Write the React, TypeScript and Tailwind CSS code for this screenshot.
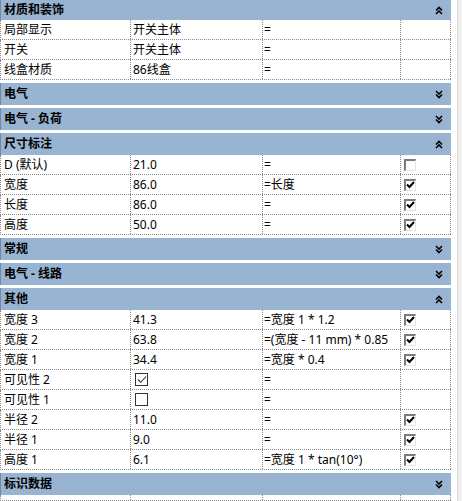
import React from "react";

type Mark = "on" | "off" | null;
type Row = { name: string; value: string | boolean; formula: string; lock: Mark };
type Section = { title: string; open: boolean; rows?: Row[] };

const sections: Section[] = [
  {
    title: "材质和装饰",
    open: true,
    rows: [
      { name: "局部显示", value: "开关主体", formula: "=", lock: null },
      { name: "开关", value: "开关主体", formula: "=", lock: null },
      { name: "线盒材质", value: "86线盒", formula: "=", lock: null },
    ],
  },
  { title: "电气", open: false },
  { title: "电气 - 负荷", open: false },
  {
    title: "尺寸标注",
    open: true,
    rows: [
      { name: "D (默认)", value: "21.0", formula: "=", lock: "off" },
      { name: "宽度", value: "86.0", formula: "=长度", lock: "on" },
      { name: "长度", value: "86.0", formula: "=", lock: "on" },
      { name: "高度", value: "50.0", formula: "=", lock: "on" },
    ],
  },
  { title: "常规", open: false },
  { title: "电气 - 线路", open: false },
  {
    title: "其他",
    open: true,
    rows: [
      { name: "宽度 3", value: "41.3", formula: "=宽度 1 * 1.2", lock: "on" },
      { name: "宽度 2", value: "63.8", formula: "=(宽度 - 11 mm) * 0.85", lock: "on" },
      { name: "宽度 1", value: "34.4", formula: "=宽度 * 0.4", lock: "on" },
      { name: "可见性 2", value: true, formula: "=", lock: null },
      { name: "可见性 1", value: false, formula: "=", lock: null },
      { name: "半径 2", value: "11.0", formula: "=", lock: "on" },
      { name: "半径 1", value: "9.0", formula: "=", lock: "on" },
      { name: "高度 1", value: "6.1", formula: "=宽度 1 * tan(10°)", lock: "on" },
    ],
  },
  { title: "标识数据", open: false },
];

function Chevrons({ up }: { up: boolean }) {
  return (
    <svg width="8" height="9" viewBox="0 0 8 9" className={up ? "" : "rotate-180"}>
      <path d="M1 4.5 L4 1.5 L7 4.5 M1 8 L4 5 L7 8" fill="none" stroke="#000" strokeWidth="1.6" />
    </svg>
  );
}

// old style sunken checkbox used in the lock column
function LockBox({ checked }: { checked: boolean }) {
  return (
    <span className="flex w-[12px] h-[12px] items-center justify-center bg-white border-t-2 border-l-2 border-t-[#7c7c7c] border-l-[#7c7c7c] border-b border-r border-b-[#e4e4e4] border-r-[#e4e4e4]">
      {checked && (
        <svg width="9" height="8" viewBox="0 0 9 8">
          <path d="M1 3.5 L3.5 6 L8 1" fill="none" stroke="#000" strokeWidth="2" />
        </svg>
      )}
    </span>
  );
}

function FlatBox({ checked }: { checked: boolean }) {
  return (
    <span className="flex w-[13px] h-[13px] items-center justify-center bg-white border border-[#333]">
      {checked && (
        <svg width="10" height="9" viewBox="0 0 10 9">
          <path d="M1 4.5 L3.8 7.3 L9 1.5" fill="none" stroke="#333" strokeWidth="1.1" />
        </svg>
      )}
    </span>
  );
}

const cell = "flex items-center h-full border-r border-dotted border-[#8a8a8a] whitespace-nowrap";

function DataRow({ row }: { row?: Row }) {
  return (
    <div className="grid grid-cols-[130px_132px_138px_50px] h-[20px] border-l border-b border-dotted border-[#8a8a8a] bg-white">
      <div className={cell + " pl-[3px]"}>{row?.name}</div>
      <div className={cell + " pl-[2px]"}>
        {row && (typeof row.value === "boolean" ? <span className="pl-[2px]"><FlatBox checked={row.value} /></span> : row.value)}
      </div>
      <div className={cell + " pl-[1px]"}>{row?.formula}</div>
      <div className={cell + " pl-[3px]"}>{row && row.lock && <LockBox checked={row.lock === "on"} />}</div>
    </div>
  );
}

export default function App() {
  return (
    <div className="w-[462px] h-[501px] overflow-hidden bg-white flex text-[12px] text-black [font-family:'Noto_Sans','Noto_Sans_CJK_SC',sans-serif]">
      <div className="w-[451px] flex flex-col">
        {sections.map((s, i) => (
          <div key={s.title} className={i === 0 ? "" : "mt-[3px]"}>
            <div
              className={
                "flex items-center justify-between bg-[#99b4d1] border-l border-[#6f8aa8] pl-[3px] pr-[8px] font-bold " +
                (i === 0 ? "h-[20px]" : "h-[22px]")
              }
            >
              <span>{s.title}</span>
              <Chevrons up={s.open} />
            </div>
            {s.open && s.rows?.map((r) => <DataRow key={r.name} row={r} />)}
          </div>
        ))}
        <DataRow />
      </div>
      <div className="w-[11px] h-full flex">
        <div className="w-[6px] bg-white" />
        <div className="w-[1px] bg-[#dcdcdc]" />
        <div className="flex-1 bg-[#f0f0f0]" />
      </div>
    </div>
  );
}
